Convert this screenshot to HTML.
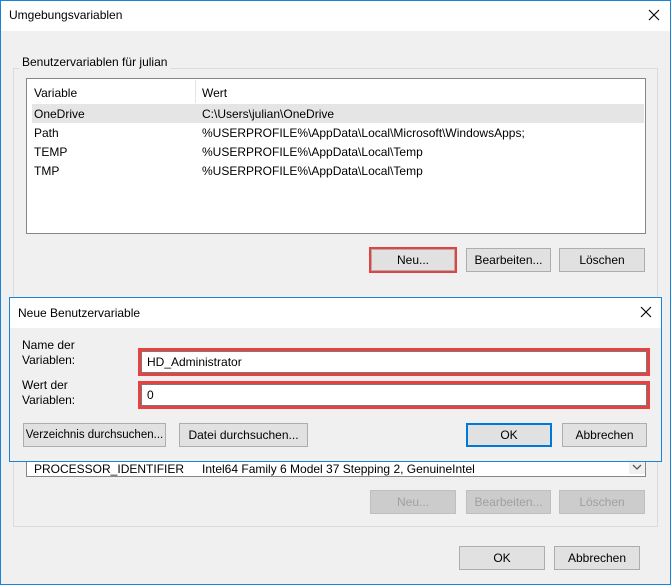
<!DOCTYPE html>
<html><head><meta charset="utf-8"><style>
*{box-sizing:border-box;margin:0;padding:0}
body{width:671px;height:585px;overflow:hidden;background:#f0f0f0;font:12px "Liberation Sans",sans-serif;color:#000;position:relative}
.a{position:absolute}
.win{left:0;top:0;width:671px;height:585px;border:1px solid #1883d7;background:#f0f0f0}
.tb{background:#fff}
.btn{position:absolute;background:#e1e1e1;border:1px solid #adadad;text-align:center;line-height:22px;height:24px;white-space:nowrap;overflow:hidden}
.dis{color:#a0a0a0;background:#cccccc;border-color:#bfbfbf}
.t{position:absolute;white-space:nowrap}
</style></head><body>
<div class="a win"></div>
<div class="a tb" style="left:1px;top:1px;width:669px;height:30px"></div>
<div class="t" style="left:9px;top:8px">Umgebungsvariablen</div>
<svg class="a" style="left:648px;top:9px" width="12" height="12"><path d="M1 1L11 11M11 1L1 11" stroke="#000" stroke-width="1.1"/></svg>

<div class="a" style="left:13px;top:68px;width:645px;height:459px;border:1px solid #dcdcdc"></div>
<div class="t" style="left:19px;top:55px;background:#f0f0f0;padding:0 3px">Benutzervariablen für julian</div>
<div class="a" style="left:26px;top:78px;width:620px;height:156px;border:1px solid #828790;background:#fff"></div>
<div class="a" style="left:195px;top:80px;width:1px;height:23px;background:#e5e5e5"></div>
<div class="a" style="left:32px;top:104px;width:612px;height:19px;background:#e5e5e5"></div>
<div class="t" style="left:34px;top:86px">Variable</div><div class="t" style="left:202px;top:86px">Wert</div>
<div class="t" style="left:34px;top:107px">OneDrive</div><div class="t" style="left:202px;top:107px">C:\Users\julian\OneDrive</div>
<div class="t" style="left:34px;top:126px">Path</div><div class="t" style="left:202px;top:126px">%USERPROFILE%\AppData\Local\Microsoft\WindowsApps;</div>
<div class="t" style="left:34px;top:145px">TEMP</div><div class="t" style="left:202px;top:145px">%USERPROFILE%\AppData\Local\Temp</div>
<div class="t" style="left:34px;top:164px">TMP</div><div class="t" style="left:202px;top:164px">%USERPROFILE%\AppData\Local\Temp</div>
<div class="btn" style="left:371px;top:249px;width:84px;height:22px;line-height:20px">Neu...</div>
<div class="a" style="left:369px;top:247px;width:88px;height:26px;border:2px solid #e84142"></div>
<div class="btn" style="left:466px;top:248px;width:85px">Bearbeiten...</div>
<div class="btn" style="left:559px;top:248px;width:86px">Löschen</div>

<div class="a" style="left:26px;top:455px;width:620px;height:22px;border:1px solid #828790;border-top:none;background:#fff"></div>
<div class="t" style="left:34px;top:462px">PROCESSOR_IDENTIFIER</div><div class="t" style="left:202px;top:462px">Intel64 Family 6 Model 37 Stepping 2, GenuineIntel</div>
<div class="a" style="left:629px;top:462px;width:16px;height:12px;background:#f0f0f0"></div>
<svg class="a" style="left:632px;top:463px" width="10" height="8"><path d="M1 2L5 6L9 2" stroke="#555" fill="none" stroke-width="1.3"/></svg>
<div class="btn dis" style="left:370px;top:490px;width:86px">Neu...</div>
<div class="btn dis" style="left:466px;top:490px;width:85px">Bearbeiten...</div>
<div class="btn dis" style="left:559px;top:490px;width:86px">Löschen</div>
<div class="btn" style="left:459px;top:546px;width:86px">OK</div>
<div class="btn" style="left:554px;top:546px;width:86px">Abbrechen</div>

<div class="a" style="left:9px;top:297px;width:653px;height:165px;border:1px solid #1883d7;background:#f0f0f0"></div>
<div class="a tb" style="left:10px;top:298px;width:651px;height:30px"></div>
<div class="t" style="left:18px;top:306px">Neue Benutzervariable</div>
<svg class="a" style="left:640px;top:306px" width="12" height="12"><path d="M1 1L11 11M11 1L1 11" stroke="#000" stroke-width="1.1"/></svg>
<div class="t" style="left:22px;top:338px;line-height:15px">Name der<br>Variablen:</div>
<div class="t" style="left:22px;top:378px;line-height:15px">Wert der<br>Variablen:</div>
<div class="a" style="left:138px;top:348px;width:512px;height:28px;border:3px solid #e84142;background:#fff"><div style="position:absolute;inset:0;border:1px solid #7a7a7a"></div></div>
<div class="t" style="left:147px;top:355px">HD_Administrator</div>
<div class="a" style="left:138px;top:381px;width:512px;height:28px;border:3px solid #e84142;background:#fff"><div style="position:absolute;inset:0;border:1px solid #7a7a7a"></div></div>
<div class="t" style="left:147px;top:388px">0</div>
<div class="btn" style="left:23px;top:423px;width:143px;font-size:11.5px">Verzeichnis durchsuchen...</div>
<div class="btn" style="left:179px;top:423px;width:129px">Datei durchsuchen...</div>
<div class="btn" style="left:466px;top:423px;width:86px;border:2px solid #0078d7;line-height:20px">OK</div>
<div class="btn" style="left:562px;top:423px;width:85px">Abbrechen</div>
</body></html>
